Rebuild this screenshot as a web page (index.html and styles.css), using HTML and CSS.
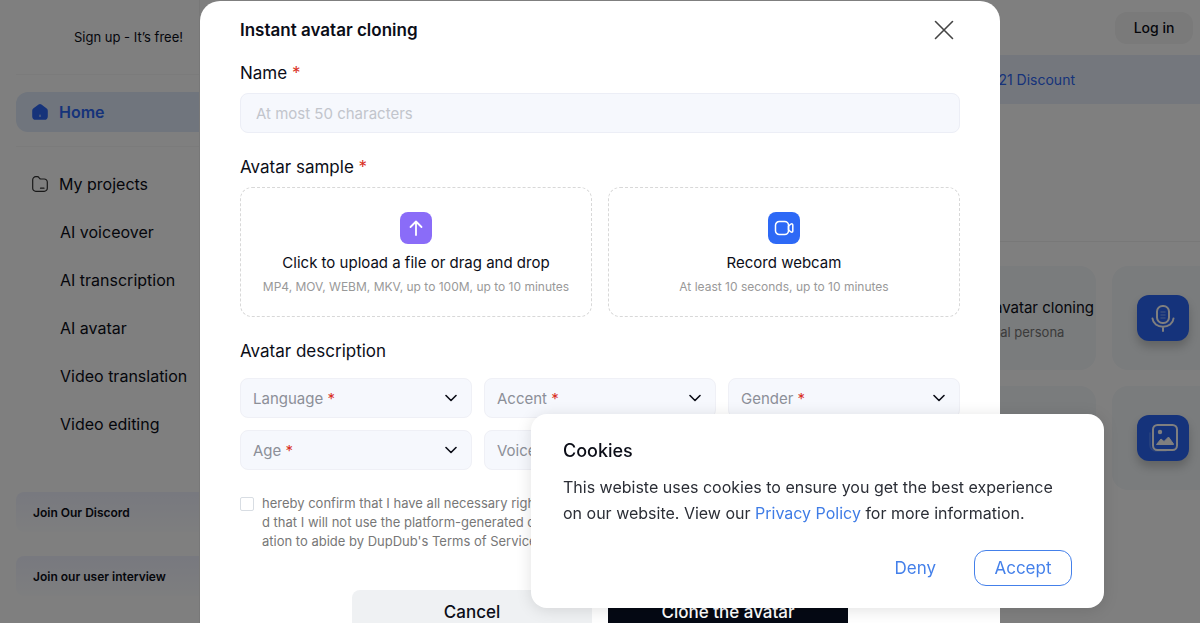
FILE: index.html
```html
<!DOCTYPE html>
<html lang="en">
<head>
<meta charset="utf-8">
<title>Instant avatar cloning</title>
<link rel="stylesheet" href="styles.css">
</head>
<body>
<div class="app">
  <aside class="sidebar">
    <a class="signup" href="#">Sign up - It’s free!</a>
    <a class="nav-item nav-home" href="#">
      <svg width="16" height="16" viewBox="0 0 16 16"><path d="M6.600.600a2.400 2.400 0 0 1 2.800 0l5 3.700A3 3 0 0 1 15.800 6.800V12a3.700 3.700 0 0 1-3.700 3.800H3.900A3.700 3.700 0 0 1 .2 12V6.800a3 3 0 0 1 1.300-2.500z" fill="#2d66f5"/><path d="M8 11v1.500" stroke="#cfe0ff" stroke-width="1.100" stroke-linecap="round"/></svg>
      Home
    </a>
    <nav class="nav">
      <a class="nav-item" href="#">
        <svg width="16" height="16" viewBox="0 0 16 16" fill="none" stroke="#333" stroke-width="1.200" stroke-linecap="round" stroke-linejoin="round"><path d="M.7 3.800A3.100 3.100 0 0 1 3.800.7h1.500c.8 0 1.300.3 1.700.9l.6.8c.3.400.7.600 1.200.600h3.400a3.100 3.100 0 0 1 3.100 3.100v6.100a3.100 3.100 0 0 1-3.100 3.100H3.800a3.100 3.100 0 0 1-3.100-3.100z"/><path d="M8.500 12.200h3.500"/></svg>
        My projects
      </a>
      <a class="nav-item nav-sub" href="#">AI voiceover</a>
      <a class="nav-item nav-sub" href="#">AI transcription</a>
      <a class="nav-item nav-sub" href="#">AI avatar</a>
      <a class="nav-item nav-sub" href="#">Video translation</a>
      <a class="nav-item nav-sub" href="#">Video editing</a>
    </nav>
    <div class="promos">
      <a class="promo" href="#">Join Our Discord</a>
      <a class="promo" href="#">Join our user interview</a>
    </div>
  </aside>
  <main class="main">
    <header class="topbar"><button class="login" type="button">Log in</button></header>
    <div class="banner"><a href="#">21 Discount</a></div>
    <section class="hero"></section>
    <section class="cards">
      <article class="card card-wide">
        <div class="card-text"><h3>Instant avatar cloning</h3><p>Your digital persona</p></div>
      </article>
      <article class="card">
        <span class="tile"><svg width="28" height="28" viewBox="0 0 28 28" fill="none" stroke="#fff" stroke-width="2" stroke-linecap="round"><rect x="8" y="2" width="12" height="17" rx="5.500"/><path d="M3.500 14.500c.5 5 5 8.200 10.500 8.200s10-3.200 10.500-8.200M14 22.700V27"/><path d="M12 8h4M12 11h4M12 14h4" stroke="#6f9bff" stroke-width="1.500"/></svg></span>
      </article>
      <article class="card card-wide"></article>
      <article class="card">
        <span class="tile"><svg width="32" height="32" viewBox="0 0 32 32" fill="none"><path d="M3 11v12a6 6 0 0 0 6 6h10" stroke="#6f9bff" stroke-opacity=".6" stroke-width="1.500" stroke-linecap="round"/><rect x="6" y="3" width="24" height="25" rx="4.500" stroke="#fff" stroke-width="2"/><circle cx="13" cy="10" r="2.200" fill="#fff"/><path d="m9.500 22.500 4.500-5.500 3 2.500 4.500-4.500 5 7v.5z" fill="#fff" stroke="#fff" stroke-linejoin="round"/></svg></span>
      </article>
    </section>
  </main>
</div>

<div class="overlay">
  <form class="modal" role="dialog" aria-labelledby="modal-title">
    <header class="modal-head">
      <h1 id="modal-title">Instant avatar cloning</h1>
      <button class="close" type="button" aria-label="Close"><svg width="20" height="20" viewBox="0 0 20 20" fill="none" stroke="#444" stroke-width="1.600" stroke-linecap="round"><path d="m1.500 1.500 17 17M18.500 1.500l-17 17"/></svg></button>
    </header>

    <section class="section section-first">
      <label class="label" for="name">Name <span class="req">*</span></label>
      <input class="text-input" id="name" type="text" maxlength="50" placeholder="At most 50 characters">
    </section>

    <section class="section">
      <h2 class="label">Avatar sample <span class="req">*</span></h2>
      <div class="samples">
        <button class="sample" type="button">
          <span class="sample-icon upload"><svg width="16" height="16" viewBox="0 0 16 16" fill="none" stroke="#fff" stroke-width="1.800" stroke-linecap="round" stroke-linejoin="round"><path d="M8 15V1.500M2.500 7 8 1.500 13.500 7"/></svg></span>
          <span class="sample-title">Click to upload a file or drag and drop</span>
          <span class="sample-note">MP4, MOV, WEBM, MKV, up to 100M, up to 10 minutes</span>
        </button>
        <button class="sample" type="button">
          <span class="sample-icon webcam"><svg width="20" height="16" viewBox="0 0 20 16" fill="none" stroke="#fff" stroke-width="1.500" stroke-linejoin="round"><rect x="1.500" y="1.500" width="13" height="13" rx="3.800"/><path d="M14.500 6.200 16.500 4.300q2.300-1.200 2.300.8v5.800q0 2-2.300.8l-2-1.900z"/></svg></span>
          <span class="sample-title">Record webcam</span>
          <span class="sample-note">At least 10 seconds, up to 10 minutes</span>
        </button>
      </div>
    </section>

    <section class="section">
      <h2 class="label">Avatar description</h2>
      <div class="selects">
        <div class="field"><select id="language"><option value=""></option></select><label for="language">Language <span class="req">*</span></label><svg class="chevron" width="12" height="8" viewBox="0 0 12 8"><path d="m1 1.500 5 5 5-5"/></svg></div>
        <div class="field"><select id="accent"><option value=""></option></select><label for="accent">Accent <span class="req">*</span></label><svg class="chevron" width="12" height="8" viewBox="0 0 12 8"><path d="m1 1.500 5 5 5-5"/></svg></div>
        <div class="field"><select id="gender"><option value=""></option></select><label for="gender">Gender <span class="req">*</span></label><svg class="chevron" width="12" height="8" viewBox="0 0 12 8"><path d="m1 1.500 5 5 5-5"/></svg></div>
        <div class="field"><select id="age"><option value=""></option></select><label for="age">Age <span class="req">*</span></label><svg class="chevron" width="12" height="8" viewBox="0 0 12 8"><path d="m1 1.500 5 5 5-5"/></svg></div>
        <div class="field"><select id="voice"><option value=""></option></select><label for="voice">Voice</label></div>
      </div>
    </section>

    <div class="consent">
      <input id="confirm" type="checkbox">
      <label for="confirm">hereby confirm that I have all necessary right<br>d that I will not use the platform-generated c<br>ation to abide by DupDub's Terms of Service a</label>
    </div>

    <footer class="actions">
      <button class="btn cancel" type="button">Cancel</button>
      <button class="btn clone" type="submit">Clone the avatar</button>
    </footer>
  </form>
</div>

<aside class="cookies" role="dialog" aria-labelledby="cookies-title">
  <h2 id="cookies-title">Cookies</h2>
  <p>This webiste uses cookies to ensure you get the best experience on our website. View our <a href="#">Privacy Policy</a> for more information.</p>
  <div class="cookie-actions">
    <button class="deny" type="button">Deny</button>
    <button class="accept" type="button">Accept</button>
  </div>
</aside>
</body>
</html>
```

FILE: styles.css
```css
* { box-sizing: border-box; }
body {
  margin: 0;
  height: 100vh;
  overflow: hidden;
  background: #fff;
  color: #0b0d17;
  font-family: Inter, "Open Sans", sans-serif;
  font-size: 16px;
}
h1, h2, h3, p { margin: 0; font-weight: 400; }
button, input, select { font: inherit; color: inherit; }
button { border: 0; padding: 0; background: none; cursor: pointer; }
a { color: inherit; text-decoration: none; }

/* Page behind the dialog */
.app { display: flex; height: 100vh; overflow: hidden; }
.sidebar {
  flex: 0 0 200px;
  display: flex;
  flex-direction: column;
  padding: 0 0 0 16px;
  border-right: 1px solid #f0f0f0;
}
.signup {
  height: 75px;
  padding-left: 58px;
  border-bottom: 1px solid #f6f6f6;
  font-size: 13px;
  line-height: 75px;
}
.nav-item {
  display: flex;
  align-items: center;
  gap: 11px;
  height: 48px;
  padding-left: 16px;
  white-space: nowrap;
}
.nav-home {
  height: 40px;
  margin: 17px 0 14px;
  border-radius: 12px 0 0 12px;
  background: #e0eafa;
  color: #2d66f5;
  font-weight: 600;
}
.nav { padding-top: 13px; border-top: 1px solid #f6f6f6; }
.nav-sub { padding-left: 44px; }
.promos { display: grid; gap: 24px; margin-top: 44px; }
.promo {
  height: 40px;
  padding-left: 17px;
  border-radius: 8px 0 0 8px;
  background: linear-gradient(#f0f2ff, #fcfdff);
  font-size: 12px;
  font-weight: 600;
  line-height: 42px;
}
.main { flex: 1; min-width: 0; overflow: hidden; }
.topbar {
  display: flex;
  align-items: center;
  justify-content: flex-end;
  height: 55px;
  padding-right: 7px;
}
.login {
  width: 78px;
  height: 32px;
  border-radius: 12px;
  background: #f4f4f4;
  font-size: 14px;
  font-weight: 500;
}
.banner {
  display: flex;
  align-items: center;
  justify-content: flex-end;
  height: 49px;
  padding-right: 125px;
  background: #e9effb;
  color: #2d66f5;
  font-size: 14px;
}
.hero { height: 138px; border-bottom: 1px solid #f0f0f0; }
.cards {
  display: grid;
  grid-template-columns: 896px 280px;
  gap: 16px;
  padding-top: 24px;
}
.card {
  display: flex;
  align-items: center;
  height: 104px;
  padding-left: 25px;
  border-radius: 16px;
  background: #f4f8fa;
}
.card-wide { justify-content: flex-end; padding-right: 2px; }
.card-text { padding-top: 4px; }
.card-text h3 { font-size: 15px; line-height: 24px; }
.card-text p { color: #777; font-size: 13px; line-height: 24px; }
.tile {
  display: grid;
  place-items: center;
  width: 52px;
  height: 46px;
  border-radius: 12px;
  background: #2b66f6;
  box-shadow: 0 6px 10px rgba(0, 0, 0, .2);
}

/* Cloning dialog */
.overlay {
  position: fixed;
  inset: 0;
  overflow: hidden;
  padding-top: 1px;
  background: rgba(0, 0, 0, .5);
}
.modal {
  max-width: 800px;
  margin: 0 auto;
  padding: 17px 40px 40px;
  border-radius: 20px;
  background: #fff;
}
.modal-head {
  display: flex;
  align-items: center;
  justify-content: space-between;
  height: 24px;
}
.modal-head h1 { font-size: 17px; font-weight: 600; }
.close { display: grid; place-items: center; width: 32px; height: 32px; }
.section { padding-top: 22px; }
.section-first { padding-top: 19px; }
.label { display: block; margin-bottom: 8px; font-size: 17px; line-height: 24px; }
.req { color: #d93025; }
.text-input {
  width: 100%;
  height: 40px;
  padding: 0 15px;
  border: 1px solid #eceef6;
  border-radius: 8px;
  background: #f6f8fd;
  font-size: 15px;
}
.text-input::placeholder { color: #c2c5cc; }
.samples { display: grid; grid-template-columns: 1fr 1fr; gap: 16px; }
.sample {
  display: flex;
  flex-direction: column;
  align-items: center;
  height: 130px;
  padding-top: 24px;
  border: 1px dashed #d8d8d8;
  border-radius: 12px;
}
.sample-icon {
  display: grid;
  place-items: center;
  width: 32px;
  height: 32px;
  border-radius: 8px;
}
.upload { background: #8a6cf8; }
.webcam { background: #2d69f6; }
.sample-title { margin-top: 7px; font-size: 15px; line-height: 24px; }
.sample-note { color: #999; font-size: 12px; line-height: 24px; }
.selects { display: grid; grid-template-columns: repeat(3, 1fr); gap: 12px; padding-top: 7px; }
.field { display: grid; align-items: center; height: 40px; }
.field > * { grid-area: 1 / 1; }
.field select {
  width: 100%;
  height: 40px;
  appearance: none;
  border: 1px solid #eff0f6;
  border-radius: 8px;
  background: #f6f8fd;
}
.field label { padding-left: 13px; color: #8c8f98; font-size: 15px; pointer-events: none; }
.chevron {
  justify-self: end;
  margin-right: 15px;
  fill: none;
  stroke: #0b0d17;
  stroke-width: 1.6;
  stroke-linecap: round;
  stroke-linejoin: round;
  pointer-events: none;
}
.consent {
  display: flex;
  gap: 8px;
  padding-top: 24px;
  color: #777;
  font-size: 13px;
  line-height: 19px;
  white-space: nowrap;
}
.consent input {
  flex: none;
  appearance: none;
  width: 14px;
  height: 14px;
  margin: 3px 0 0;
  border: 1px solid #d8dde3;
  border-radius: 2px;
}
.actions { display: flex; justify-content: center; gap: 16px; padding-top: 39px; }
.btn { width: 240px; height: 44px; border-radius: 8px; font-size: 17px; font-weight: 500; }
.cancel { background: #eff1f3; }
.clone { border-radius: 0; background: #050914; color: #fff; }

/* Cookie notice */
.cookies {
  position: fixed;
  right: 8%;
  bottom: 15px;
  max-width: 573px;
  padding: 24px 32px 22px;
  border-radius: 16px;
  background: #fff;
  box-shadow: 0 2px 16px rgba(0, 0, 0, .12);
}
.cookies h2 { margin-bottom: 10px; font-size: 18px; font-weight: 500; line-height: 26px; }
.cookies p { color: #2b2e36; font-size: 16px; line-height: 26px; }
.cookies a { color: #3f7ce6; }
.cookie-actions { display: flex; justify-content: flex-end; gap: 14px; margin-top: 24px; color: #4480ea; }
.cookie-actions button { height: 36px; font-size: 17px; }
.cookie-actions .deny { padding: 0 24px; }
.accept { width: 98px; border: 1px solid #4480ea; border-radius: 12px; }
```
